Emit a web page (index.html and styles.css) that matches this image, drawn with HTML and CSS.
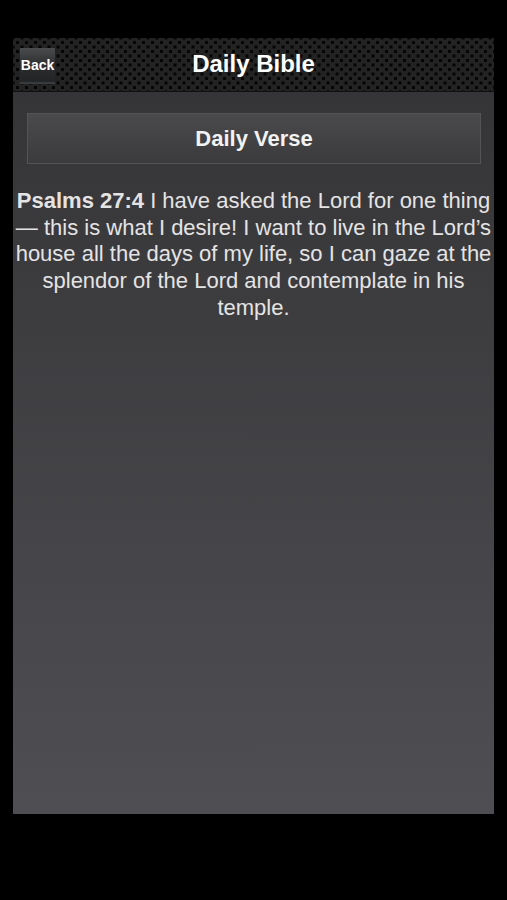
FILE: index.html
```html
<!DOCTYPE html>
<html lang="en">
<head>
  <meta charset="UTF-8" />
  <title>Daily Bible</title>
  <link rel="stylesheet" href="styles.css">
</head>
<body>

  <div class="screen">
    <div class="header">
      <div class="back">Back</div>
      <h1>Daily Bible</h1>
    </div>

    <div class="content">
      <div class="verse-btn">Daily Verse</div>
      <p class="verse"><b>Psalms 27:4</b> I have asked the Lord for one thing — this is what I desire! I want to live in the Lord’s house all the days of my life, so I can gaze at the splendor of the Lord and contemplate in his temple.</p>
    </div>
  </div>

</body>
</html>
```

FILE: styles.css
```css
html, body {
  margin: 0;
  background: #000;
}

body {
  font-family: "Liberation Sans", Arial, sans-serif;
  padding-top: 38px;
}

.screen {
  width: 481px;
  height: 776px;
  margin-left: 13px;
  display: flex;
  flex-direction: column;
}

.header {
  position: relative;
  height: 54px;
  flex-shrink: 0;
  background-color: #232324;
  background-image:
    radial-gradient(circle, #050505 1.4px, transparent 1.9px),
    radial-gradient(circle, #050505 1.4px, transparent 1.9px);
  background-size: 9px 9px;
  background-position: 0 0, 4.5px 4.5px;
  border-bottom: 1px solid #111;
  box-sizing: border-box;
}

.header h1 {
  margin: 0;
  text-align: center;
  line-height: 52px;
  font-size: 24px;
  font-weight: bold;
  color: #fff;
}

.back {
  position: absolute;
  left: 7px;
  top: 10px;
  width: 35px;
  height: 36px;
  background: linear-gradient(#4a4b4d, #2b2c2e 55%, #232426);
  border-bottom: 2px solid #3a3b3d;
  box-sizing: border-box;
  color: #fff;
  font-size: 14px;
  font-weight: bold;
  line-height: 34px;
  text-align: center;
}

.content {
  flex: 1;
  background: linear-gradient(#353537, #4f4e53);
  padding: 21px 13px 0 14px;
}

.verse-btn {
  height: 51px;
  background: linear-gradient(#4a4a4c, #3b3b3d);
  border: 1px solid #545456;
  box-sizing: border-box;
  color: #f2f2f2;
  font-size: 22px;
  font-weight: bold;
  text-align: center;
  line-height: 50px;
}

.verse {
  margin: 24px -11px 0 -12px;
  color: #e4e4e4;
  font-size: 22px;
  line-height: 26.7px;
  text-align: center;
}
```
